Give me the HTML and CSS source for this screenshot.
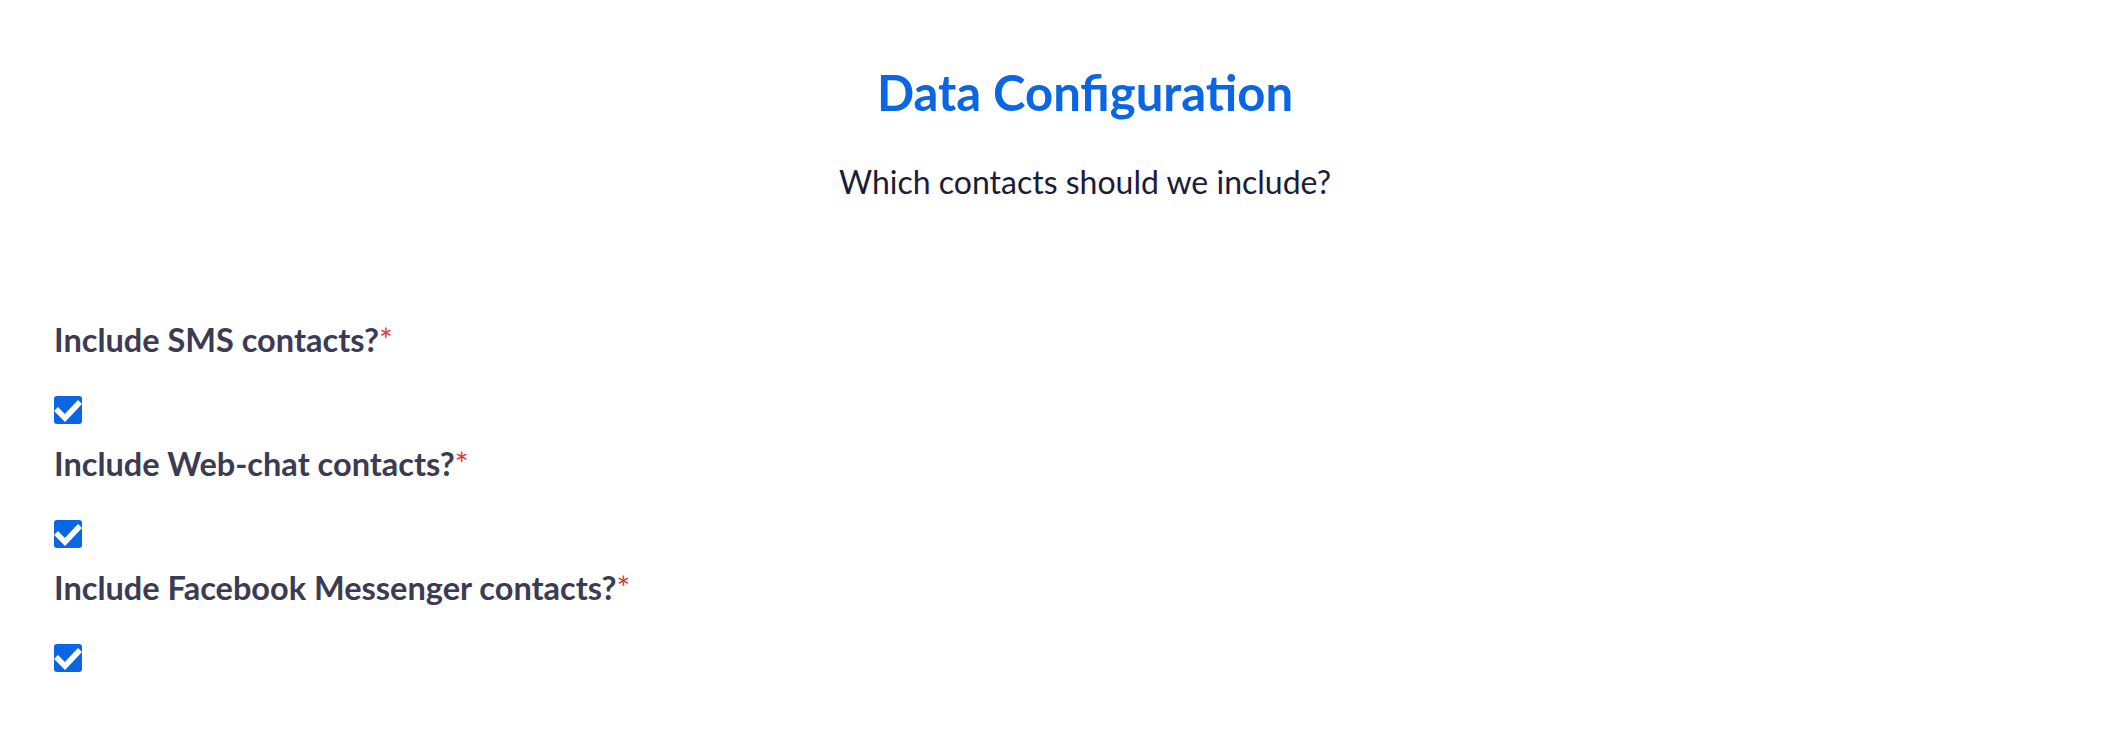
FILE: index.html
```html
<!DOCTYPE html>
<html>
<head>
    <meta charset="UTF-8" />
    <title>Data Configuration</title>
    <link rel="stylesheet" href="styles.css">
</head>

<body>
    <div class="page">
        <div class="head">
            <h1 class="title">Data Configuration</h1>
            <p class="sub">Which contacts should we include?</p>
        </div>

        <form class="form">
            <div class="field">
                <div class="label">Include SMS contacts?<span class="req">*</span></div>
                <span class="check">
                    <svg viewBox="0 0 28 28" width="28" height="28"><polyline points="2,13 11,22 26,6" /></svg>
                </span>
            </div>
            <div class="field">
                <div class="label">Include Web-chat contacts?<span class="req">*</span></div>
                <span class="check">
                    <svg viewBox="0 0 28 28" width="28" height="28"><polyline points="2,13 11,22 26,6" /></svg>
                </span>
            </div>
            <div class="field">
                <div class="label">Include Facebook Messenger contacts?<span class="req">*</span></div>
                <span class="check">
                    <svg viewBox="0 0 28 28" width="28" height="28"><polyline points="2,13 11,22 26,6" /></svg>
                </span>
            </div>
        </form>
    </div>
</body>

</html>
```

FILE: styles.css
```css
*{
    margin: 0;
    padding: 0;
    box-sizing: border-box;
}
body{
    background: #fff;
    font-family: Lato, "Noto Sans", sans-serif;
}
.page{
    padding: 60px 0 0 54px;
}
.head{
    padding-left: 10px;
    text-align: center;
}
.title{
    font-size: 49px;
    line-height: 64px;
    font-weight: 700;
    color: #0a66e4;
}
.sub{
    margin-top: 38px;
    font-size: 32px;
    line-height: 40px;
    font-weight: 400;
    color: #1b1b3a;
}
.form{
    margin-top: 118px;
}
.field{
    display: flex;
    flex-direction: column;
    align-items: flex-start;
}
.label{
    font-size: 32.5px;
    line-height: 40px;
    font-weight: 700;
    color: #3b3b54;
}
.req{
    color: #e03a3a;
    font-weight: 400;
}
.check{
    display: block;
    width: 28px;
    height: 28px;
    margin-top: 36px;
    margin-bottom: 20px;
    border-radius: 3px;
    background: #0a66e4;
    overflow: hidden;
}
.check svg{
    display: block;
}
.check polyline{
    fill: none;
    stroke: #fff;
    stroke-width: 5.5;
}
```
